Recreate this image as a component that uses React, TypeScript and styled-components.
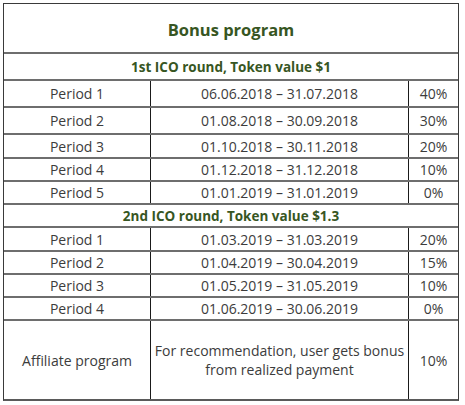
import React from "react";
import styled, { createGlobalStyle } from "styled-components";

const Global = createGlobalStyle`
  html, body { margin: 0; padding: 0; background: #ffffff; }
  body { font-family: "Open Sans", "Liberation Sans", sans-serif; }
`;

const Wrapper = styled.div`
  padding: 3px 0 0 3px;
`;

const Sheet = styled.div`
  width: 456px;
  box-sizing: border-box;
  border: 1px solid #3a3a3a;
  border-bottom: 2px solid #5a5a5a;
  display: flex;
  flex-direction: column;
`;

const TitleRow = styled.div`
  height: 50px;
  box-sizing: border-box;
  border-bottom: 2px solid #6e6e6e;
  display: flex;
  align-items: center;
  justify-content: center;
  font-weight: 700;
  font-size: 16.5px;
  color: #375623;
  padding-top: 3px;
`;

const SectionRow = styled.div<{ $h: number }>`
  height: ${(p) => p.$h}px;
  box-sizing: border-box;
  border-bottom: 2px solid #6e6e6e;
  display: flex;
  align-items: center;
  justify-content: center;
  font-weight: 700;
  font-size: 13.5px;
  color: #375623;
`;

const DataRow = styled.div<{ $h: number; $last?: boolean }>`
  height: ${(p) => p.$h}px;
  box-sizing: border-box;
  border-bottom: ${(p) => (p.$last ? "none" : "2px solid #6e6e6e")};
  display: grid;
  grid-template-columns: 147px 258px 1fr;
  font-size: 14px;
  color: #3c3c3c;
`;

const Cell = styled.div<{ $divider?: boolean }>`
  display: flex;
  align-items: center;
  justify-content: center;
  text-align: center;
  line-height: 19px;
  border-right: ${(p) => (p.$divider ? "1px solid #1a1a1a" : "none")};
`;

type Period = { name: string; range: string; pct: string; h: number };

const round1: Period[] = [
  { name: "Period 1", range: "06.06.2018 – 31.07.2018", pct: "40%", h: 27 },
  { name: "Period 2", range: "01.08.2018 – 30.09.2018", pct: "30%", h: 27 },
  { name: "Period 3", range: "01.10.2018 – 30.11.2018", pct: "20%", h: 24 },
  { name: "Period 4", range: "01.12.2018 – 31.12.2018", pct: "10%", h: 23 },
  { name: "Period 5", range: "01.01.2019 – 31.01.2019", pct: "0%", h: 23 },
];

const round2: Period[] = [
  { name: "Period 1", range: "01.03.2019 – 31.03.2019", pct: "20%", h: 24 },
  { name: "Period 2", range: "01.04.2019 – 30.04.2019", pct: "15%", h: 23 },
  { name: "Period 3", range: "01.05.2019 – 31.05.2019", pct: "10%", h: 23 },
  { name: "Period 4", range: "01.06.2019 – 30.06.2019", pct: "0%", h: 23 },
];

const Row = ({ p }: { p: Period }) => (
  <DataRow $h={p.h}>
    <Cell $divider>{p.name}</Cell>
    <Cell $divider>{p.range}</Cell>
    <Cell>{p.pct}</Cell>
  </DataRow>
);

export default function App() {
  return (
    <Wrapper>
      <Global />
      <Sheet>
        <TitleRow>Bonus program</TitleRow>
        <SectionRow $h={27}>1st ICO round, Token value $1</SectionRow>
        {round1.map((p) => (
          <Row key={"a" + p.name} p={p} />
        ))}
        <SectionRow $h={23}>2nd ICO round, Token value $1.3</SectionRow>
        {round2.map((p) => (
          <Row key={"b" + p.name} p={p} />
        ))}
        <DataRow $h={78} $last>
          <Cell $divider>Affiliate program</Cell>
          <Cell $divider>
            For recommendation, user gets bonus
            <br />
            from realized payment
          </Cell>
          <Cell>10%</Cell>
        </DataRow>
      </Sheet>
    </Wrapper>
  );
}
